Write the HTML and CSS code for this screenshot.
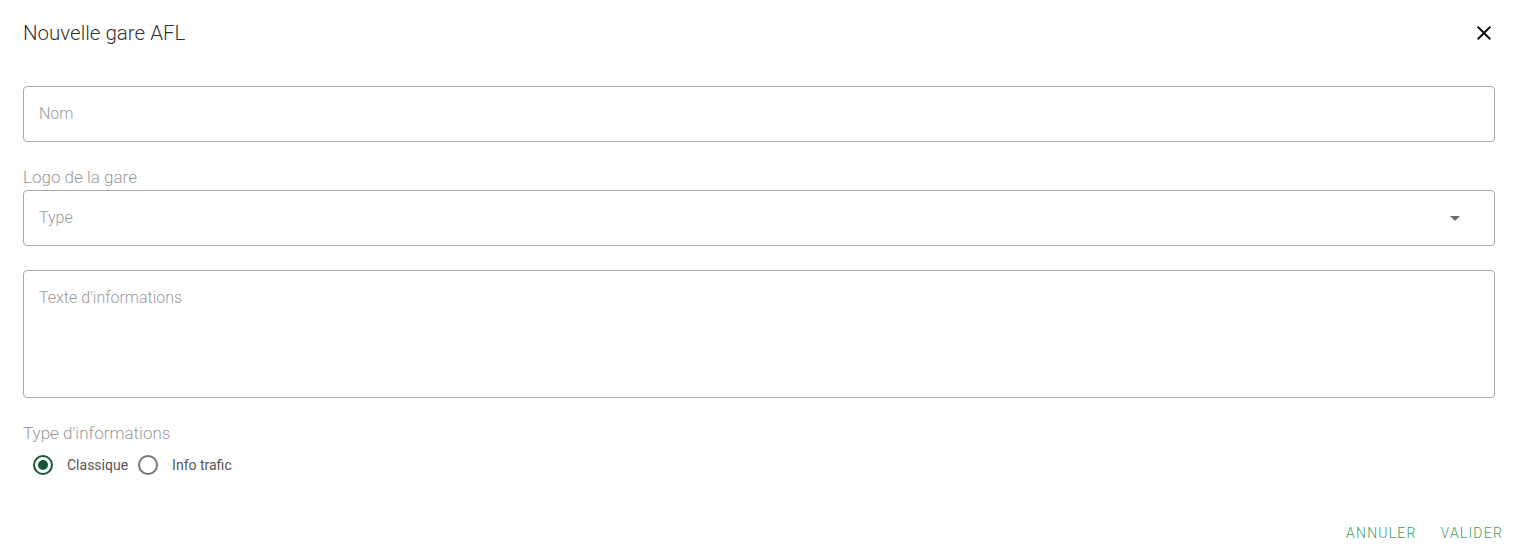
FILE: index.html
```html
<!DOCTYPE html>
<html lang="fr">
<head>
  <meta charset="UTF-8">
  <title>Nouvelle gare AFL</title>
  <link rel="stylesheet" href="styles.css">
</head>
<body>
  <div class="dialog">
    <div class="dialog-title">
      <h2>Nouvelle gare AFL</h2>
      <button class="close" aria-label="Fermer">
        <svg width="24" height="24" viewBox="0 0 24 24"><path d="M19 6.41L17.59 5 12 10.59 6.41 5 5 6.41 10.59 12 5 17.59 6.41 19 12 13.41 17.59 19 19 17.59 13.41 12z"/></svg>
      </button>
    </div>

    <div class="dialog-content">
      <input class="field" type="text" placeholder="Nom">

      <div class="group">
        <label class="label">Logo de la gare</label>
        <div class="field select">
          <span class="placeholder">Type</span>
          <span class="arrow"></span>
        </div>
      </div>

      <textarea class="field area" placeholder="Texte d'informations"></textarea>

      <div class="group radios-group">
        <label class="label">Type d'informations</label>
        <div class="radios">
          <label class="radio checked"><span class="dot"></span>Classique</label>
          <label class="radio"><span class="dot"></span>Info trafic</label>
        </div>
      </div>
    </div>

    <div class="dialog-actions">
      <button class="action">Annuler</button>
      <button class="action">Valider</button>
    </div>
  </div>
</body>
</html>
```

FILE: styles.css
```css
* { box-sizing: border-box; }
body { margin: 0; background: #fff; font-family: Roboto, "Liberation Sans", sans-serif; color: #222; }

.dialog { width: 1518px; height: 559px; padding: 0 23px; display: flex; flex-direction: column; }

.dialog-title { display: flex; align-items: center; justify-content: space-between; padding-top: 17px; height: 49px; }
.dialog-title h2 { margin: 0; font-size: 20.5px; font-weight: 300; line-height: 32px; color: #333; }
.close { background: none; border: none; padding: 0; margin-right: -1px; width: 24px; height: 24px; cursor: pointer; }
.close svg { display: block; fill: #111; }

.dialog-content { display: flex; flex-direction: column; padding-top: 37px; }

.field { width: 100%; border: 1px solid #a8a8a8; border-radius: 4px; background: #fff; font-family: inherit; font-size: 16px; font-weight: 300; padding: 0 15px; outline: none; }
input.field { height: 56px; padding-bottom: 2px; }
.field::placeholder, .placeholder { color: #9a9a9a; font-weight: 300; }

.group { margin-top: 26px; }
.label { display: block; font-size: 17px; font-weight: 300; color: #9a9a9a; line-height: 18px; height: 22px; }

.select { height: 56px; display: flex; align-items: center; justify-content: space-between; padding-right: 34px; padding-bottom: 2px; }
.arrow { width: 0; height: 0; border-left: 5px solid transparent; border-right: 5px solid transparent; border-top: 5px solid #6e6e6e; margin-top: 2px; }

.area { height: 128px; margin-top: 24px; padding-top: 17px; resize: none; line-height: 20px; }

.radios-group { margin-top: 26px; }
.radios { display: flex; align-items: center; padding-left: 10px; margin-top: 9px; }
.radio { display: flex; align-items: center; font-size: 14px; color: #555; margin-right: 10px; }
.radio .dot { width: 20px; height: 20px; border: 2px solid #757575; border-radius: 50%; margin-right: 14px; display: flex; align-items: center; justify-content: center; }
.radio.checked .dot { border-color: #17563a; }
.radio.checked .dot::after { content: ""; width: 10px; height: 10px; border-radius: 50%; background: #17563a; }

.dialog-actions { display: flex; justify-content: flex-end; margin-top: auto; margin-right: -16px; padding-bottom: 12px; gap: 8px; }
.action { background: none; border: none; font-family: inherit; font-size: 14px; font-weight: 300; letter-spacing: 1.2px; text-transform: uppercase; color: #3f9a62; padding: 6px 8px; cursor: pointer; }
```
